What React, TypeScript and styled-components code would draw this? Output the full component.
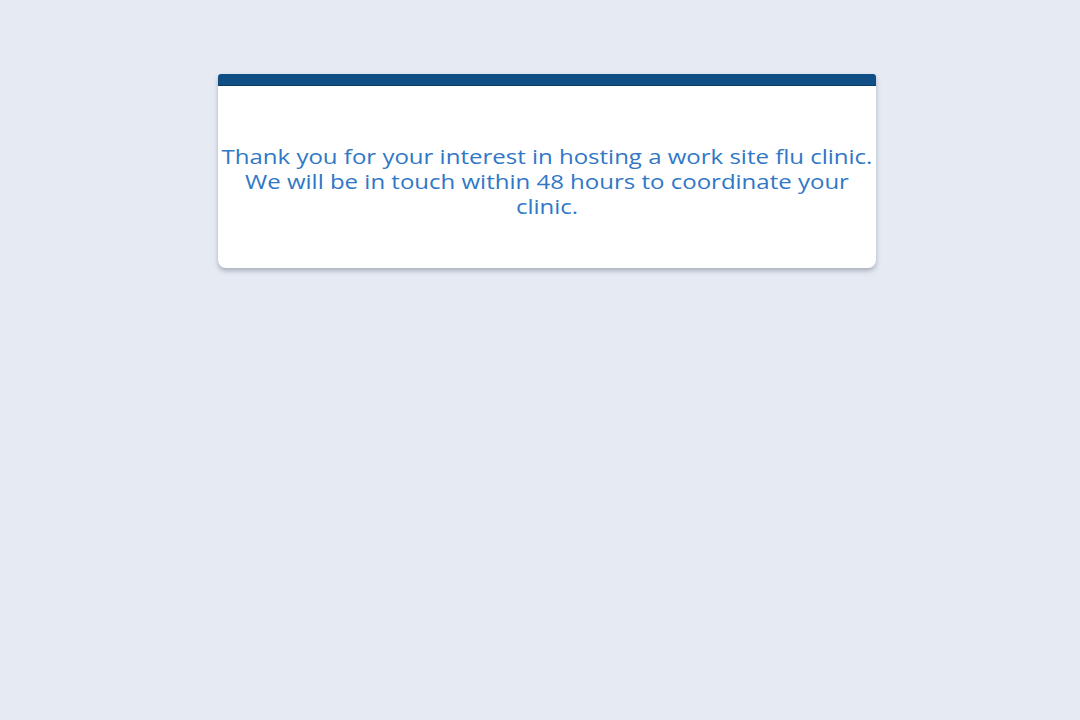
import React from 'react';
import styled, { createGlobalStyle } from 'styled-components';

const GlobalStyle = createGlobalStyle`
  html, body {
    margin: 0;
    padding: 0;
    background: #e6ebf3;
  }
  body {
    font-family: 'Open Sans', 'Liberation Sans', sans-serif;
  }
`;

export default function App() {
  return (
    <Page>
      <GlobalStyle />
      <Card>
        <TopBar />
        <Body>
          <Message>
            Thank you for your interest in hosting a work site flu clinic. We will be in touch
            within 48 hours to coordinate your clinic.
          </Message>
        </Body>
      </Card>
    </Page>
  );
}

const Page = styled.div`
  min-height: 720px;
  padding: 74px 0 0 218px;
  box-sizing: border-box;
`;

const Card = styled.div`
  width: 658px;
  background: #ffffff;
  border-radius: 3px 3px 8px 8px;
  box-shadow: 0 3px 5px rgba(60, 70, 90, 0.35);
  overflow: hidden;
`;

const TopBar = styled.div`
  height: 11px;
  background: #0f4f85;
  border-bottom: 1px solid #0b3a66;
`;

const Body = styled.div`
  display: flex;
  justify-content: center;
  padding: 58px 0 49px;
`;

/* the text in the shot is drawn wide; Open Sans stretched to match */
const Message = styled.p`
  margin: 0;
  width: 552px;
  flex: none;
  text-align: center;
  color: #3077c6;
  font-size: 20px;
  line-height: 25px;
  transform: scaleX(1.2);
  transform-origin: center;
`;
